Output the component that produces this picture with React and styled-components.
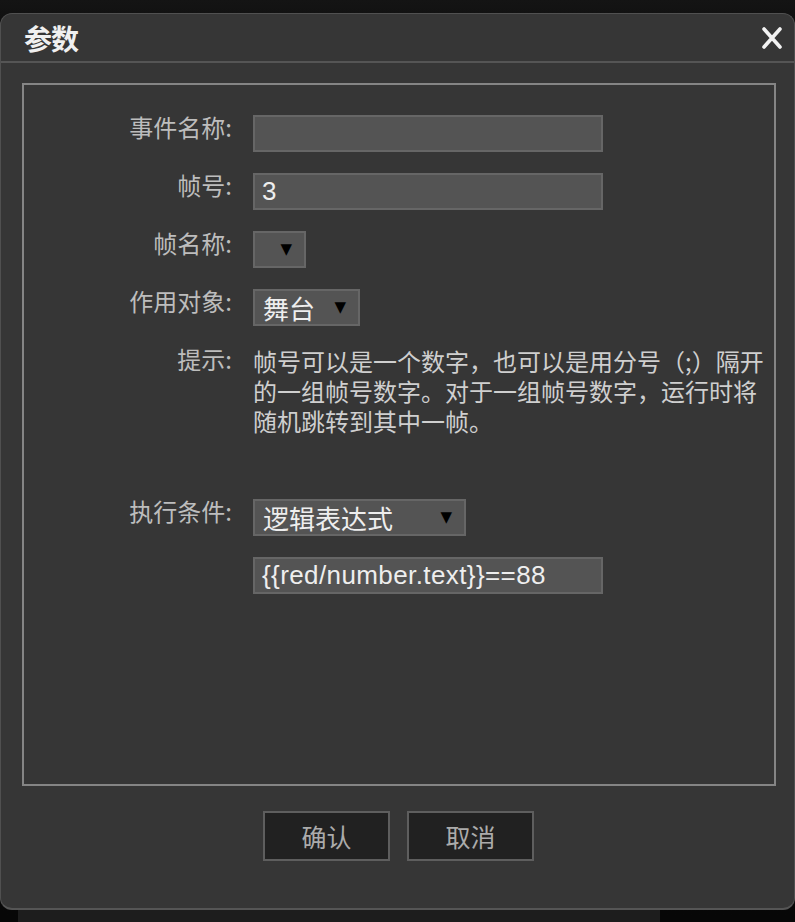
import styled, { createGlobalStyle } from 'styled-components';

const GlobalStyle = createGlobalStyle`
  html, body {
    margin: 0;
    padding: 0;
    background: #0c0c0c;
  }
  body {
    font-family: "Noto Sans CJK SC", "Noto Sans", sans-serif;
  }
`;

const Page = styled.div`
  width: 795px;
  height: 922px;
  padding-top: 13px;
  box-sizing: border-box;
  display: flex;
  flex-direction: column;
  background: linear-gradient(#141414, #0a0a0a 60px, #070707);
  overflow: hidden;
`;

const Dialog = styled.div`
  width: 795px;
  height: 900px;
  box-sizing: border-box;
  background: #363636;
  border: 1px solid #505050;
  border-bottom: 2px solid #555;
  border-radius: 12px;
  display: flex;
  flex-direction: column;
`;

const TitleBar = styled.div`
  height: 47px;
  flex: none;
  border-bottom: 2px solid #555;
  display: flex;
  align-items: center;
  justify-content: space-between;
  padding: 0 11px 0 23px;
`;

const Title = styled.div`
  color: #f0f0f0;
  font-size: 28px;
  font-weight: 700;
  letter-spacing: -1px;
`;

const CloseButton = styled.button`
  background: none;
  border: 0;
  padding: 0;
  width: 22px;
  height: 24px;
  display: flex;
  align-items: center;
  justify-content: center;
  cursor: pointer;
`;

const Body = styled.div`
  padding: 20px 18px 0 21px;
`;

const Panel = styled.div`
  height: 703px;
  box-sizing: border-box;
  border: 2px solid #858585;
  padding-top: 30px;
  display: flex;
  flex-direction: column;
`;

const Row = styled.div`
  display: flex;
  align-items: flex-start;
  gap: 21px;
  margin-bottom: ${(p) => p.$gap ?? 21}px;
`;

const Label = styled.div`
  width: 208px;
  flex: none;
  text-align: right;
  color: #bdbdbd;
  font-size: 24px;
  line-height: 30px;
  margin-top: -3px;
`;

const Input = styled.div`
  width: 350px;
  height: 37px;
  box-sizing: border-box;
  background: #545454;
  border: 2px solid #666;
  color: #eee;
  font-family: "Liberation Sans", Arial, sans-serif;
  font-size: 26px;
  letter-spacing: 0.4px;
  line-height: 33px;
  padding-left: 7px;
  white-space: nowrap;
`;

const Select = styled.div`
  width: ${(p) => p.$width}px;
  height: 37px;
  box-sizing: border-box;
  background: #545454;
  border: 2px solid #666;
  display: flex;
  align-items: center;
  justify-content: space-between;
  padding: 0 12px 0 8px;
  color: #eee;
  font-size: 26px;
  line-height: 33px;
`;

const Arrow = styled.span`
  color: #000;
  font-size: 15px;
  line-height: 1;
  margin-left: auto;
  font-family: "DejaVu Sans", sans-serif;
`;

const Hint = styled.div`
  color: #cfcfcf;
  font-size: 24px;
  line-height: 30px;
  margin-top: -1px;
`;

const Footer = styled.div`
  display: flex;
  justify-content: center;
  gap: 17px;
  margin-top: 25px;
  padding-right: 1px;
`;

const Button = styled.button`
  width: 127px;
  height: 50px;
  box-sizing: border-box;
  background: #212121;
  border: 2px solid #5e5e5e;
  color: #ababab;
  font-family: "Noto Sans CJK SC", sans-serif;
  font-size: 25px;
  padding: 0;
  cursor: pointer;
`;

const Shadow = styled.div`
  margin-left: 18px;
  width: 642px;
  height: 12px;
  background: #1d1d1d;
`;

function CloseIcon() {
  return (
    <svg width="22" height="24" viewBox="0 0 22 24">
      <path d="M3 3 L19 21 M19 3 L3 21" stroke="#f2f2f2" strokeWidth="3.6" strokeLinecap="round" />
    </svg>
  );
}

export default function App() {
  return (
    <Page>
      <GlobalStyle />
      <Dialog>
        <TitleBar>
          <Title>参数</Title>
          <CloseButton aria-label="close">
            <CloseIcon />
          </CloseButton>
        </TitleBar>
        <Body>
          <Panel>
            <Row>
              <Label>事件名称:</Label>
              <Input />
            </Row>
            <Row>
              <Label>帧号:</Label>
              <Input>3</Input>
            </Row>
            <Row>
              <Label>帧名称:</Label>
              <Select $width={53}>
                <Arrow>▼</Arrow>
              </Select>
            </Row>
            <Row>
              <Label>作用对象:</Label>
              <Select $width={107}>
                舞台
                <Arrow>▼</Arrow>
              </Select>
            </Row>
            <Row $gap={63}>
              <Label>提示:</Label>
              <Hint>
                帧号可以是一个数字，也可以是用分号（;）隔开
                <br />
                的一组帧号数字。对于一组帧号数字，运行时将
                <br />
                随机跳转到其中一帧。
              </Hint>
            </Row>
            <Row>
              <Label>执行条件:</Label>
              <Select $width={213}>
                逻辑表达式
                <Arrow>▼</Arrow>
              </Select>
            </Row>
            <Row>
              <Label />
              <Input>{'{{red/number.text}}==88'}</Input>
            </Row>
          </Panel>
          <Footer>
            <Button>确认</Button>
            <Button>取消</Button>
          </Footer>
        </Body>
      </Dialog>
      <Shadow />
    </Page>
  );
}
